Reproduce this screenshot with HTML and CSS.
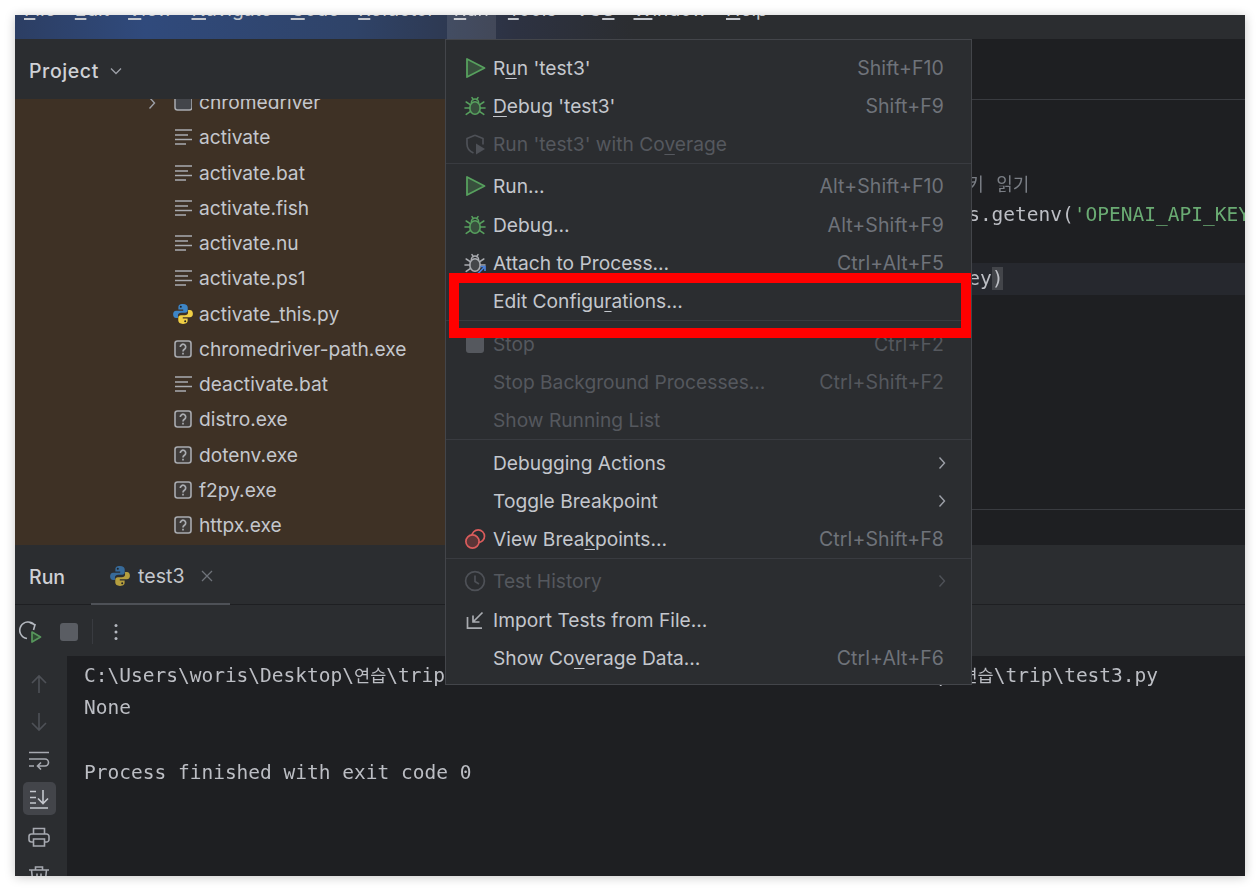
FILE: index.html
```html
<!DOCTYPE html>
<html lang="en">
<head>
<meta charset="utf-8">
<title>PyCharm Run menu</title>
<link rel="stylesheet" href="styles.css">
</head>
<body>
<svg class="defs" aria-hidden="true">
  <symbol id="i-run" viewBox="0 0 22 22"><path d="M3 2 20.500 11 3 20Z" fill="currentColor" fill-opacity=".3" stroke="currentColor" stroke-width="1.800" stroke-linejoin="round"/></symbol>
  <symbol id="i-bug" viewBox="0 0 22 22"><g fill="none" stroke="currentColor" stroke-width="1.600" stroke-linecap="round"><ellipse cx="11" cy="13" rx="5.200" ry="6.300" fill="currentColor" fill-opacity=".3"/><path d="M7.400 7.600a3.600 3.600 0 0 1 7.200 0M8 2.600l1.400 2M14 2.600l-1.400 2M1 13h4.800M16.200 13H21M2.200 7l4 2.600M19.800 7l-4 2.600M2.200 19.400l4-2.800M19.800 19.400l-4-2.800"/></g></symbol>
  <symbol id="i-attach" viewBox="0 0 22 22"><g fill="none" stroke="currentColor" stroke-width="1.600" stroke-linecap="round"><ellipse cx="11" cy="13" rx="5.200" ry="6.300" fill="currentColor" fill-opacity=".2"/><path d="M7.400 7.600a3.600 3.600 0 0 1 7.200 0M8 2.600l1.400 2M14 2.600l-1.400 2M1 13h4.800M16.200 13H21M2.200 7l4 2.600M19.800 7l-4 2.600M2.200 19.400l4-2.800"/></g><path d="M14 21.500l7-7M16.500 14.500H21V19" fill="none" stroke="#4a7fd8" stroke-width="1.700"/></symbol>
  <symbol id="i-cov" viewBox="0 0 22 22"><path d="M11 2.200 19 5.500v6M9.500 20C5 18 3 14.500 3 11V5.500L11 2.200" fill="none" stroke="currentColor" stroke-width="1.700" stroke-linejoin="round"/><path d="M12 10.500 21 16 12 21.500Z" fill="currentColor"/></symbol>
  <symbol id="i-bp" viewBox="0 0 22 22"><circle cx="14.200" cy="8.200" r="6.300" fill="none" stroke="#db5c5c" stroke-width="1.700"/><circle cx="8.500" cy="13.500" r="6.600" fill="#5c3537" stroke="#db5c5c" stroke-width="1.700"/></symbol>
  <symbol id="i-clock" viewBox="0 0 22 22"><circle cx="11" cy="11" r="9.400" fill="none" stroke="currentColor" stroke-width="1.700"/><path d="M11 5.500V11.500L15 14" fill="none" stroke="currentColor" stroke-width="1.700"/></symbol>
  <symbol id="i-import" viewBox="0 0 22 22"><path d="M3.500 8V19.200H18M18.500 3.500 9 13M9 6.500V13H15.500" fill="none" stroke="currentColor" stroke-width="1.700"/></symbol>
  <symbol id="i-text" viewBox="0 0 18 18"><path d="M1 2h17M1 7h13M1 11.500h17M1 16h11" fill="none" stroke="currentColor" stroke-width="1.600"/></symbol>
  <symbol id="i-unknown" viewBox="0 0 18 18"><rect x="1" y="1" width="16" height="16" rx="2.500" fill="#43454a" fill-opacity=".6" stroke="currentColor" stroke-width="1.600"/><path d="M6.300 7a2.700 2.700 0 1 1 4.200 2.200c-1 .7-1.500 1-1.500 2.300M9 12.800v1.700" fill="none" stroke="currentColor" stroke-width="1.700"/></symbol>
  <symbol id="i-folder" viewBox="0 0 18 18"><rect x="1" y="1" width="17" height="16" rx="2.500" fill="#43454a" stroke="currentColor" stroke-width="1.500"/></symbol>
  <symbol id="i-py" viewBox="0 0 20 20"><path d="M10 1C6.500 1 5.800 2.400 5.800 4V6h4.400v1H3.800C2 7 1 8.400 1 10.200 1 12.200 2 13.700 3.800 13.700H5.400V11.400C5.400 9.800 6.700 8.900 8.300 8.900H12C13.400 8.900 14.300 8 14.300 6.600V4C14.300 2.200 12.800 1 10 1Z" fill="#3d85c6"/><path d="M10 19C13.500 19 14.200 17.600 14.200 16V14H9.800V13H16.200C18 13 19 11.600 19 9.800 19 7.800 18 6.300 16.200 6.300H14.600V8.600C14.600 10.200 13.300 11.100 11.700 11.100H8C6.600 11.100 5.700 12 5.700 13.400V16C5.700 17.800 7.200 19 10 19Z" fill="#f0cf45"/><circle cx="8" cy="3.500" r=".9" fill="#1e1f22"/><circle cx="12" cy="16.500" r=".9" fill="#1e1f22"/></symbol>
  <symbol id="i-rerun" viewBox="0 0 24 24"><path d="M15.500 5A8.300 8.300 0 1 0 8 18.500M10.500 2.500 16 4.800 14.500 10" fill="none" stroke="#b4b8bf" stroke-width="1.600"/><path d="M13 12 21.500 17 13 22Z" fill="#2f4a33" stroke="#57965c" stroke-width="1.700" stroke-linejoin="round"/></symbol>
  <symbol id="i-up" viewBox="0 0 22 22"><path d="M11 20V3M4 10l7-7 7 7" fill="none" stroke="currentColor" stroke-width="1.600"/></symbol>
  <symbol id="i-down" viewBox="0 0 22 22"><path d="M11 2V19M4 12l7 7 7-7" fill="none" stroke="currentColor" stroke-width="1.600"/></symbol>
  <symbol id="i-wrap" viewBox="0 0 22 22"><path d="M1 3.500H21M1 10H17a3.300 3.300 0 0 1 0 7H10M1 17H6M13 13.500 9.500 17 13 20.500" fill="none" stroke="currentColor" stroke-width="1.600"/></symbol>
  <symbol id="i-end" viewBox="0 0 22 22"><path d="M2 3.500H8M2 9.500H8M2 15H8M2 20H20M15 2V15.500M10 10.500l5 5 5-5" fill="none" stroke="currentColor" stroke-width="1.600"/></symbol>
  <symbol id="i-print" viewBox="0 0 22 22"><path d="M5.500 8V2.500H16.500V8M5 16H3.500A2.500 2.500 0 0 1 1 13.500V10.500A2.500 2.500 0 0 1 3.500 8H18.500A2.500 2.500 0 0 1 21 10.500V13.500A2.500 2.500 0 0 1 18.500 16H17M5.500 13H16.500V20H5.500Z" fill="none" stroke="currentColor" stroke-width="1.600"/></symbol>
  <symbol id="i-trash" viewBox="0 0 22 22"><path d="M1 6H21M7.500 6V3H14.500V6M3.500 6 5 20H17L18.500 6M9 9.500V17M13 9.500V17" fill="none" stroke="currentColor" stroke-width="1.600"/></symbol>
</svg>

<div class="window">
  <nav class="menubar">
    <span class="mb"><u>F</u>ile</span>
    <span class="mb"><u>E</u>dit</span>
    <span class="mb"><u>V</u>iew</span>
    <span class="mb"><u>N</u>avigate</span>
    <span class="mb"><u>C</u>ode</span>
    <span class="mb"><u>R</u>efactor</span>
    <span class="mb mb-active"><u>R</u>un</span>
    <span class="mb"><u>T</u>ools</span>
    <span class="mb">VC<u>S</u></span>
    <span class="mb"><u>W</u>indow</span>
    <span class="mb"><u>H</u>elp</span>
  </nav>

  <div class="upper">
    <aside class="project">
      <header class="project-head">
        <span class="project-title">Project</span>
        <svg class="chev" viewBox="0 0 12 8"><path d="M1 1.500 6 6.500 11 1.500" fill="none" stroke="currentColor" stroke-width="1.300"/></svg>
      </header>
      <ul class="tree">
        <li class="row"><svg class="expander" viewBox="0 0 8 14"><path d="M1.500 1.500 6.500 7 1.500 12.500" fill="none" stroke="currentColor" stroke-width="1.400"/></svg><svg class="ficon"><use href="#i-folder"/></svg>chromedriver</li>
        <li class="row"><svg class="ficon"><use href="#i-text"/></svg>activate</li>
        <li class="row"><svg class="ficon"><use href="#i-text"/></svg>activate.bat</li>
        <li class="row"><svg class="ficon"><use href="#i-text"/></svg>activate.fish</li>
        <li class="row"><svg class="ficon"><use href="#i-text"/></svg>activate.nu</li>
        <li class="row"><svg class="ficon"><use href="#i-text"/></svg>activate.ps1</li>
        <li class="row"><svg class="ficon ficon-py"><use href="#i-py"/></svg>activate_this.py</li>
        <li class="row"><svg class="ficon"><use href="#i-unknown"/></svg>chromedriver-path.exe</li>
        <li class="row"><svg class="ficon"><use href="#i-text"/></svg>deactivate.bat</li>
        <li class="row"><svg class="ficon"><use href="#i-unknown"/></svg>distro.exe</li>
        <li class="row"><svg class="ficon"><use href="#i-unknown"/></svg>dotenv.exe</li>
        <li class="row"><svg class="ficon"><use href="#i-unknown"/></svg>f2py.exe</li>
        <li class="row"><svg class="ficon"><use href="#i-unknown"/></svg>httpx.exe</li>
      </ul>
    </aside>
    <section class="editor">
      <div class="editor-tabs"></div>
      <div class="code">
        <div class="line comment"> # <span class="ko">환경</span> <span class="ko">변수</span> <span class="ko">키</span> <span class="ko">읽기</span></div>
        <div class="line">api_key = os.getenv(<span class="str">'OPENAI_API_KEY'</span>)</div>
        <div class="line"></div>
        <div class="line current">print(api_key<span class="brace">)</span></div>
      </div>
      <div class="crumbs"></div>
    </section>
  </div>

  <section class="run">
    <header class="run-head">
      <span class="run-title">Run</span>
      <div class="run-tab">
        <svg class="tab-py"><use href="#i-py"/></svg>
        <span>test3</span>
        <svg class="tab-x" viewBox="0 0 12 12"><path d="M1 1 11 11M11 1 1 11" fill="none" stroke="currentColor" stroke-width="1.300"/></svg>
      </div>
    </header>
    <div class="run-tools">
      <svg class="tool-rerun"><use href="#i-rerun"/></svg>
      <span class="tool-stop"></span>
      <span class="tool-sep"></span>
      <svg class="tool-dots" viewBox="0 0 4 18"><circle cx="2" cy="2.500" r="1.500"/><circle cx="2" cy="9" r="1.500"/><circle cx="2" cy="15.500" r="1.500"/></svg>
    </div>
    <div class="run-body">
      <div class="gutter">
        <span class="gbtn gbtn-dim"><svg><use href="#i-up"/></svg></span>
        <span class="gbtn gbtn-dim"><svg><use href="#i-down"/></svg></span>
        <span class="gbtn"><svg><use href="#i-wrap"/></svg></span>
        <span class="gbtn gbtn-on"><svg><use href="#i-end"/></svg></span>
        <span class="gbtn"><svg><use href="#i-print"/></svg></span>
        <span class="gbtn"><svg><use href="#i-trash"/></svg></span>
      </div>
      <div class="console">
        <div class="line">C:\Users\woris\Desktop\<span class="ko">연습</span>\trip\venv\bin\runner.exe C:\Users\woris\Desktop\<span class="ko">연습</span>\trip\test3.py</div>
        <div class="line">None</div>
        <div class="line"></div>
        <div class="line">Process finished with exit code 0</div>
      </div>
    </div>
  </section>

  <div class="menu">
    <div class="group">
      <div class="item"><svg class="mi green"><use href="#i-run"/></svg><span class="label">R<u>u</u>n 'test3'</span><span class="key">Shift+F10</span></div>
      <div class="item"><svg class="mi green"><use href="#i-bug"/></svg><span class="label"><u>D</u>ebug 'test3'</span><span class="key">Shift+F9</span></div>
      <div class="item off"><svg class="mi"><use href="#i-cov"/></svg><span class="label">Run 'test3' with Co<u>v</u>erage</span></div>
    </div>
    <div class="group">
      <div class="item"><svg class="mi green"><use href="#i-run"/></svg><span class="label">Run…</span><span class="key">Alt+Shift+F10</span></div>
      <div class="item"><svg class="mi green"><use href="#i-bug"/></svg><span class="label">Debug…</span><span class="key">Alt+Shift+F9</span></div>
      <div class="item"><svg class="mi"><use href="#i-attach"/></svg><span class="label">Attach to Process…</span><span class="key">Ctrl+Alt+F5</span></div>
      <div class="item"><span class="mi"></span><span class="label">Edit Configu<u>r</u>ations…</span></div>
    </div>
    <div class="group">
      <div class="item off"><span class="mi mi-stop"></span><span class="label">Stop</span><span class="key">Ctrl+F2</span></div>
      <div class="item off"><span class="mi"></span><span class="label">Stop Background Processes…</span><span class="key">Ctrl+Shift+F2</span></div>
      <div class="item off"><span class="mi"></span><span class="label">Show Running List</span></div>
    </div>
    <div class="group">
      <div class="item"><span class="mi"></span><span class="label">Debugging Actions</span><svg class="sub" viewBox="0 0 8 14"><path d="M1.500 1.500 6.500 7 1.500 12.500" fill="none" stroke="currentColor" stroke-width="1.400"/></svg></div>
      <div class="item"><span class="mi"></span><span class="label">Toggle Breakpoint</span><svg class="sub" viewBox="0 0 8 14"><path d="M1.500 1.500 6.500 7 1.500 12.500" fill="none" stroke="currentColor" stroke-width="1.400"/></svg></div>
      <div class="item"><svg class="mi"><use href="#i-bp"/></svg><span class="label">View Brea<u>k</u>points…</span><span class="key">Ctrl+Shift+F8</span></div>
    </div>
    <div class="group">
      <div class="item off"><svg class="mi"><use href="#i-clock"/></svg><span class="label">Test History</span><svg class="sub" viewBox="0 0 8 14"><path d="M1.500 1.500 6.500 7 1.500 12.500" fill="none" stroke="currentColor" stroke-width="1.400"/></svg></div>
      <div class="item"><svg class="mi"><use href="#i-import"/></svg><span class="label">Import Tests from File…</span></div>
      <div class="item"><span class="mi"></span><span class="label">Show Co<u>v</u>erage Data…</span><span class="key">Ctrl+Alt+F6</span></div>
    </div>
  </div>

  <div class="callout"></div>
</div>
</body>
</html>
```

FILE: styles.css
```css
* { box-sizing: border-box; }

html, body { margin: 0; height: 100%; }

body {
  background: #fff;
  padding: 15px;
  font-family: Inter, "Noto Sans", sans-serif;
  font-size: 19.2px;
  color: #c4c7cd;
  overflow: hidden;
}

ul { list-style: none; margin: 0; padding: 0; }
svg { display: block; }
.defs { position: absolute; width: 0; height: 0; }

.window {
  position: relative;
  width: 1230px;
  height: 861px;
  display: flex;
  flex-direction: column;
  overflow: hidden;
  background: #1e1f22;
  box-shadow: 0 1px 10px rgba(0, 0, 0, .22);
  filter: blur(.7px);
}

/* menu bar, its text cut off by the top edge */
.menubar {
  flex: none;
  height: 24px;
  overflow: hidden;
  display: flex;
  gap: 19px;
  padding-left: 9px;
  background: linear-gradient(90deg, #2c3e63 0, #304a7c 130px, #2f4368 340px, #2d3242 500px, #2b2d30 620px);
  line-height: 24px;
}
.mb { margin-top: -18px; height: 60px; }
.mb u { text-decoration-thickness: 2px; text-underline-offset: 2px; }
.mb-active { position: relative; }
.mb-active::before {
  content: "";
  position: absolute;
  left: -7px;
  right: -7px;
  top: 0;
  height: 42px;
  background: rgba(255, 255, 255, .1);
}

.upper { flex: none; height: 506px; display: flex; }

/* project tool window */
.project { flex: none; width: 430px; display: flex; flex-direction: column; overflow: hidden; }
.project-head {
  flex: none;
  height: 60px;
  display: flex;
  align-items: center;
  gap: 11px;
  padding: 4px 0 0 14px;
  background: #2b2d30;
}
.project-title { font-weight: 500; font-size: 19.5px; letter-spacing: .6px; color: #cfd1d6; }
.chev { width: 12px; height: 8px; color: #9da0a8; }
.tree { flex: 1; background: #3e3125; overflow: hidden; }
.row {
  position: relative;
  height: 35.25px;
  display: flex;
  align-items: center;
  gap: 7px;
  padding-left: 159px;
  white-space: nowrap;
}
.row:first-child { margin-top: -14.5px; }
.ficon { width: 18px; height: 18px; flex: none; color: #a9abb0; }
.ficon-py { width: 22px; height: 22px; margin: 0 -2px; }
.expander { position: absolute; left: 133px; top: 11px; width: 8px; height: 14px; color: #9da0a8; }

/* editor */
.editor { flex: 1; display: flex; flex-direction: column; min-width: 0; overflow: hidden; }
.editor-tabs { flex: none; height: 61px; border-bottom: 1px solid #393b40; }
.code {
  flex: 1;
  padding: 67px 0 0 394px;
  font-family: "DejaVu Sans Mono", "Noto Sans CJK KR", monospace;
  font-size: 19.5px;
  color: #bcbec4;
  overflow: hidden;
}
.line { height: 32px; line-height: 32px; white-space: pre; }
.comment { color: #7a7e85; word-spacing: .8px; }
.comment .ko { font-size: 18px; }
.str { color: #6aab73; }
.ko { font-family: "Noto Sans CJK KR", sans-serif; font-size: 17.5px; }
.current { background: #26282e; margin-left: -394px; padding-left: 394px; }
.brace { background: #43454a; }
.crumbs { flex: none; height: 36px; border-top: 1px solid #393b40; }

/* run tool window */
.run { flex: 1; display: flex; flex-direction: column; min-height: 0; }
.run-head {
  flex: none;
  height: 60px;
  display: flex;
  background: #2b2d30;
  border-bottom: 1px solid #1e1f22;
}
.run-title { width: 76px; padding: 4px 0 0 14px; font-weight: 500; font-size: 19.5px; color: #cfd1d6; align-self: center; }
.run-tab {
  width: 139px;
  display: flex;
  align-items: center;
  padding: 3px 0 0 18px;
  border-bottom: 3px solid #4e5157;
  margin-bottom: -2px;
  font-size: 19.6px;
}
.tab-py { width: 22px; height: 22px; margin-right: 7px; opacity: .7; }
.tab-x { width: 12px; height: 12px; margin-left: 16px; color: #6f737a; }

.run-tools {
  flex: none;
  height: 51px;
  display: flex;
  align-items: center;
  background: #2b2d30;
  padding: 2px 0 0 4px;
}
.tool-rerun { width: 24px; height: 24px; }
.tool-stop { width: 18px; height: 18px; margin-left: 17px; border-radius: 3px; background: #5a5d63; }
.tool-sep { width: 1px; height: 25px; margin-left: 14px; background: #393b40; }
.tool-dots { width: 4px; height: 18px; margin-left: 21px; fill: #b4b8bf; }

.run-body { flex: 1; display: flex; min-height: 0; }
.gutter {
  flex: none;
  width: 52px;
  display: flex;
  flex-direction: column;
  align-items: center;
  gap: 5.2px;
  padding: 11.5px 4px 0 0;
  background: #2b2d30;
  overflow: hidden;
}
.gbtn {
  flex: none;
  width: 33px;
  height: 33px;
  display: flex;
  align-items: center;
  justify-content: center;
  border-radius: 5px;
  color: #a6a9b0;
}
.gbtn svg { width: 22px; height: 22px; }
.gbtn-dim { color: #4e5157; }
.gbtn-on { background: #43454a; color: #c4c7cd; }
.console {
  flex: 1;
  padding: 3px 0 0 17px;
  font-family: "DejaVu Sans Mono", "Noto Sans CJK KR", monospace;
  font-size: 19.5px;
  color: #bcbec4;
  overflow: hidden;
}
.console .line { height: 32.5px; line-height: 32.5px; }

/* Run dropdown */
.menu {
  position: absolute;
  left: 430px;
  top: 24px;
  width: 527px;
  height: 646px;
  background: #2b2d30;
  border: 1px solid #43454a;
  padding-top: 8.4px;
}
.group + .group { border-top: 1px solid #393b40; padding-top: 3px; }
.item {
  height: 38.3px;
  display: flex;
  align-items: center;
  padding: 0 27px 0 18px;
  white-space: nowrap;
}
.item u { text-underline-offset: 3px; }
.mi { flex: none; width: 22px; height: 22px; margin-right: 7px; color: #a9abb0; }
.mi.green { color: #57a05e; }
.off .mi { color: #4e5157; }
.mi-stop { width: 18px; height: 18px; margin: 0 9px 0 2px; border-radius: 3px; background: #55585e; }
.label { flex: 1; }
.key { color: #6f737a; font-size: 19.5px; letter-spacing: .1px; }
.off, .off .key { color: #55585e; }
.sub { width: 8px; height: 14px; color: #9da0a8; margin-right: -2px; }
.off .sub { color: #4e5157; }

/* annotation drawn over the screenshot */
.callout {
  position: absolute;
  left: 434px;
  top: 258px;
  width: 522px;
  height: 65px;
  border: 10px solid #f00;
}
```
